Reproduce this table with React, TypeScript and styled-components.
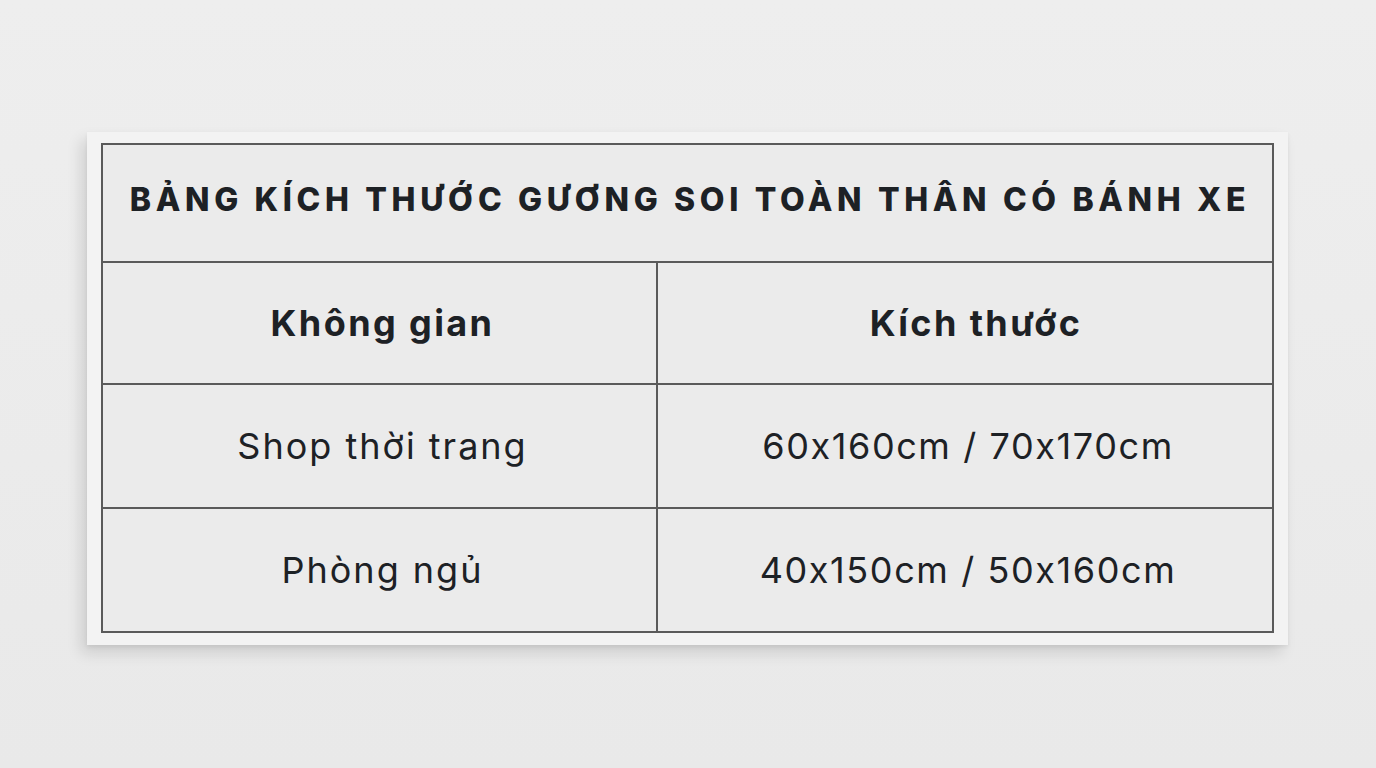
import React from 'react'
import styled, { createGlobalStyle } from 'styled-components'

const GlobalStyle = createGlobalStyle`
  html, body {
    margin: 0;
    padding: 0;
    background: #ebebeb;
  }
  body {
    font-family: Inter, "Noto Sans", sans-serif;
    font-feature-settings: "calt" 0;
    color: #1d2125;
  }
`

const rows = [
  { space: 'Shop thời trang', size: '60x160cm / 70x170cm' },
  { space: 'Phòng ngủ', size: '40x150cm / 50x160cm' },
]

const App = () => (
  <Page>
    <GlobalStyle />
    <Card>
      <Table>
        <colgroup>
          <col style={{ width: 555 }} />
          <col />
        </colgroup>
        <tbody>
          <tr>
            <TitleCell colSpan={2}>BẢNG KÍCH THƯỚC GƯƠNG SOI TOÀN THÂN CÓ BÁNH XE</TitleCell>
          </tr>
          <tr>
            <HeadCell $shift={6}>Không gian</HeadCell>
            <HeadCell $shift={22}>Kích thước</HeadCell>
          </tr>
          {rows.map((row) => (
            <tr key={row.space}>
              <BodyCell $shift={6}>{row.space}</BodyCell>
              <BodyCell $shift={6} $tight>{row.size}</BodyCell>
            </tr>
          ))}
        </tbody>
      </Table>
    </Card>
  </Page>
)

const Page = styled.div`
  width: 1376px;
  height: 768px;
  box-sizing: border-box;
  padding: 132px 0 0 87px;
  background: linear-gradient(180deg, #eeeeee 0%, #ebebeb 60%, #e9e9e9 100%);
`

const Card = styled.div`
  width: 1201px;
  box-sizing: border-box;
  padding: 11px 14px 12px;
  background: #f3f3f3;
  box-shadow: -6px 8px 14px rgba(0, 0, 0, 0.12), 0 2px 4px rgba(0, 0, 0, 0.06);
`

const Table = styled.table`
  width: 100%;
  border-collapse: collapse;
  background: #ebebeb;
  border: 2px solid #5a5a5a;
  table-layout: fixed;
`

const Cell = styled.td<{ $shift?: number }>`
  border: 2px solid #5a5a5a;
  text-align: center;
  vertical-align: middle;
  padding: 0 0 0 ${(p) => p.$shift ?? 0}px;
  box-sizing: border-box;
`

const TitleCell = styled(Cell)`
  height: 118px;
  font-size: 32px;
  font-weight: 800;
  letter-spacing: 4.65px;
  padding: 0 0 8px 5px;
`

const HeadCell = styled(Cell)`
  height: 122px;
  font-size: 36px;
  font-weight: 700;
  letter-spacing: 2.4px;
`

const BodyCell = styled(Cell)<{ $tight?: boolean }>`
  height: 124px;
  font-size: 36px;
  font-weight: 400;
  letter-spacing: ${(p) => (p.$tight ? 1.6 : 2)}px;
`

export default App
